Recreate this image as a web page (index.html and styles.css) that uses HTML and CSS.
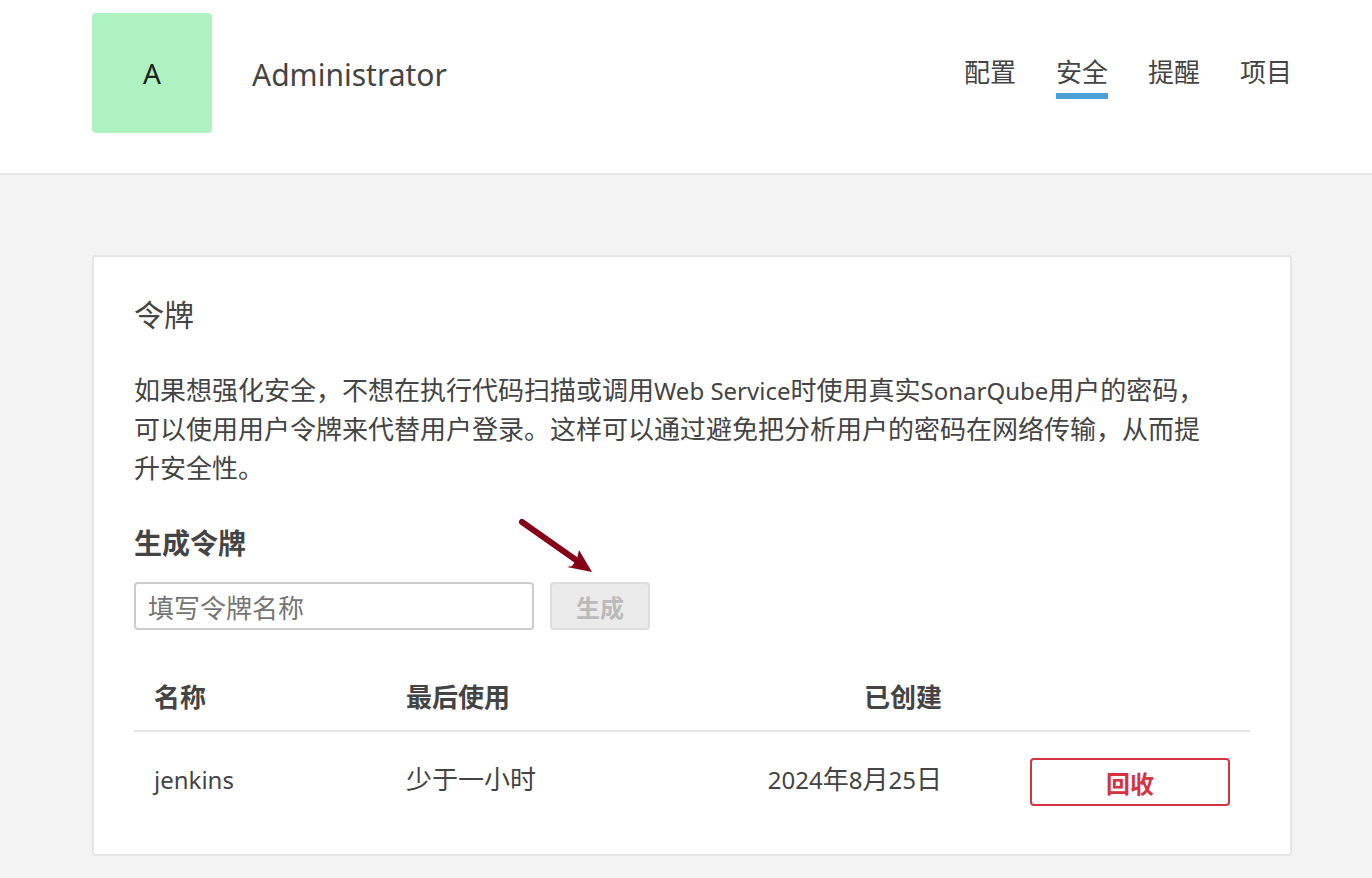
FILE: index.html
```html
<!DOCTYPE html>
<html lang="zh-CN">
<head>
    <meta charset="UTF-8">
    <meta name="viewport" content="width=device-width, initial-scale=1.0">
    <title>安全</title>
    <link rel="stylesheet" href="styles.css">
</head>
<body>
    <header class="account-header">
      <div class="account-container">
        <div class="avatar">A</div>
        <h1 class="account-name">Administrator</h1>
        <nav class="account-nav">
          <a href="#">配置</a>
          <a href="#" class="active">安全</a>
          <a href="#">提醒</a>
          <a href="#">项目</a>
        </nav>
      </div>
    </header>

    <main class="account-body">
      <section class="boxed-group">
        <h2>令牌</h2>
        <p class="description">如果想强化安全，不想在执行代码扫描或调用<span class="latin">Web Service</span>时使用真实<span class="latin">SonarQube</span>用户的密码，可以使用用户令牌来代替用户登录。这样可以通过避免把分析用户的密码在网络传输，从而提升安全性。</p>

        <h3><label for="tokenName">生成令牌</label></h3>
        <form id="tokenForm" class="token-form">
          <input type="text" id="tokenName" class="input-field" name="tokenName" placeholder="填写令牌名称" required>
          <div class="generate">
            <button type="submit" class="submit-button" disabled>生成</button>
            <svg class="arrow" width="76" height="58" viewBox="0 0 76 58" aria-hidden="true">
              <path d="M6 6L60 44" stroke="#850016" stroke-width="6" stroke-linecap="round" />
              <path d="M76 56L63 34L61 43L56 50L51 51Z" fill="#850016" />
            </svg>
          </div>
        </form>

        <table class="tokens">
          <thead>
            <tr>
              <th class="col-name">名称</th>
              <th class="col-used">最后使用</th>
              <th class="col-created">已创建</th>
              <th class="col-action"></th>
            </tr>
          </thead>
          <tbody>
            <tr>
              <td><span class="latin">jenkins</span></td>
              <td>少于一小时</td>
              <td class="col-created"><span class="latin">2024</span>年<span class="latin">8</span>月<span class="latin">25</span>日</td>
              <td class="col-action"><button type="button" class="revoke-button">回收</button></td>
            </tr>
          </tbody>
        </table>
      </section>
    </main>
</body>
</html>
```
FILE: styles.css
```css
* {
  box-sizing: border-box;
}

body {
  margin: 0;
  background-color: #f3f3f3;
  color: #444;
  font-family: "Noto Sans", "Noto Sans CJK SC", sans-serif;
  font-size: 26px;
  line-height: 39px;
}

h1,
h2,
h3,
p {
  margin: 0;
}

/* latin letters look too big next to the chinese ones */
.latin {
  font-size: 24px;
  line-height: 1;
}

.account-header {
  padding: 13px 80px 40px 92px;
  background-color: #fff;
  border-bottom: 2px solid #e6e6e6;
}

.account-container {
  display: flex;
  align-items: center;
}

.avatar {
  width: 120px;
  height: 120px;
  border-radius: 4px;
  background-color: #adf2c0;
  color: #222;
  font-size: 28px;
  line-height: 120px;
  text-align: center;
}

.account-name {
  margin-left: 40px;
  padding-top: 2px;
  font-size: 30px;
  font-weight: 400;
}

.account-nav {
  display: flex;
  gap: 40px;
  margin-left: auto;
  padding-top: 6px;
}

.account-nav a {
  height: 46px;
  border-bottom: 6px solid transparent;
  color: #444;
  text-decoration: none;
}

.account-nav a.active {
  border-color: #4b9fd5;
}

.account-body {
  padding: 80px 80px 22px 92px;
}

.boxed-group {
  padding: 38px 40px 28px;
  border: 2px solid #e6e6e6;
  border-radius: 4px;
  background-color: #fff;
}

h2 {
  font-size: 30px;
  font-weight: 400;
}

.description {
  max-width: 1080px;
  margin-top: 37px;
}

h3 {
  margin: 36px 0 19px;
  font-size: 28px;
}

.token-form {
  display: flex;
  gap: 16px;
}

.input-field {
  width: 400px;
  height: 48px;
  padding: 4px 12px 0;
  border: 2px solid #ccc;
  border-radius: 4px;
  color: #444;
  font: inherit;
}

.input-field::placeholder {
  color: #757575;
}

.generate {
  position: relative;
}

.submit-button,
.revoke-button {
  height: 48px;
  border: 2px solid #ddd;
  border-radius: 4px;
  font-family: inherit;
  font-size: 24px;
  font-weight: 700;
}

.submit-button {
  width: 100px;
  background-color: #ebebeb;
  color: #bbb;
}

.arrow {
  position: absolute;
  right: 58px;
  bottom: 56px;
  fill: none;
}

.tokens {
  width: 100%;
  margin-top: 40px;
  border-collapse: collapse;
  text-align: left;
}

.tokens th {
  padding: 8px 20px 13px;
  border-bottom: 2px solid #e6e6e6;
}

.tokens td {
  padding: 22px 20px;
}

.tokens td.col-action {
  padding: 26px 20px 20px;
}

.tokens .col-name {
  width: 252px;
}

.tokens .col-created {
  text-align: right;
}

.tokens .col-action {
  width: 288px;
  text-align: right;
}

.revoke-button {
  width: 200px;
  border-color: #d4333f;
  background-color: #fff;
  color: #d4333f;
}
```
